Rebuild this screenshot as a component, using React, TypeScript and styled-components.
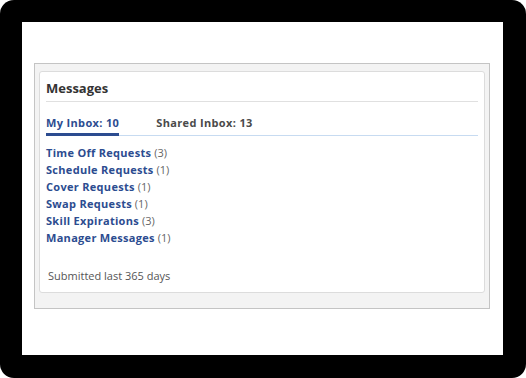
import React from "react";
import styled, { createGlobalStyle } from "styled-components";

const Global = createGlobalStyle`
  html, body { margin: 0; padding: 0; background: #ffffff; }
  body { font-family: "Open Sans", "Liberation Sans", sans-serif; }
  * { box-sizing: border-box; }
`;

const Frame = styled.div`
  width: 526px;
  height: 378px;
  background: #000;
  border-radius: 14px;
  padding: 22px 23px 23px 22px;
  display: flex;
`;

const Screen = styled.div`
  flex: 1;
  background: #fff;
  padding: 41px 13px 0 12px;
`;

const Panel = styled.div`
  background: #f3f3f3;
  border: 1px solid #c4c4c4;
  padding: 7px 4px 15px 4px;
`;

const Card = styled.div`
  background: #fff;
  border: 1px solid #dcdcdc;
  border-radius: 3px;
  padding: 0 6px 8px 6px;
`;

const Header = styled.div`
  padding: 8px 0 5px 0;
  border-bottom: 1px solid #e0e0e0;
  font-size: 13px;
  line-height: 16px;
  font-weight: 700;
  color: #333;
`;

const Tabs = styled.div`
  display: flex;
  gap: 37px;
  padding-top: 14px;
  border-bottom: 1px solid #c7dbf1;
`;

const Tab = styled.div<{ $active?: boolean }>`
  font-size: 11px;
  line-height: 14px;
  font-weight: 700;
  letter-spacing: 0.35px;
  padding-bottom: 3px;
  margin-bottom: -1px;
  color: ${(p) => (p.$active ? "#2c4c90" : "#4a4a4a")};
  border-bottom: 3px solid ${(p) => (p.$active ? "#2c4c90" : "transparent")};
`;

const List = styled.div`
  display: flex;
  flex-direction: column;
  padding-top: 8px;
`;

const Item = styled.div`
  font-size: 11px;
  line-height: 17px;
  color: #666;
`;

const Link = styled.a`
  color: #2c4c90;
  font-weight: 700;
  letter-spacing: 0.3px;
  text-decoration: none;
`;

const Footer = styled.div`
  margin-top: 21px;
  padding-left: 2px;
  font-size: 11px;
  line-height: 17px;
  color: #555;
`;

const items: [string, number][] = [
  ["Time Off Requests", 3],
  ["Schedule Requests", 1],
  ["Cover Requests", 1],
  ["Swap Requests", 1],
  ["Skill Expirations", 3],
  ["Manager Messages", 1],
];

export default function App() {
  return (
    <>
      <Global />
      <Frame>
        <Screen>
          <Panel>
            <Card>
              <Header>Messages</Header>
              <Tabs>
                <Tab $active>My Inbox: 10</Tab>
                <Tab>Shared Inbox: 13</Tab>
              </Tabs>
              <List>
                {items.map(([label, n]) => (
                  <Item key={label}>
                    <Link href="#">{label}</Link> ({n})
                  </Item>
                ))}
              </List>
              <Footer>Submitted last 365 days</Footer>
            </Card>
          </Panel>
        </Screen>
      </Frame>
    </>
  );
}
